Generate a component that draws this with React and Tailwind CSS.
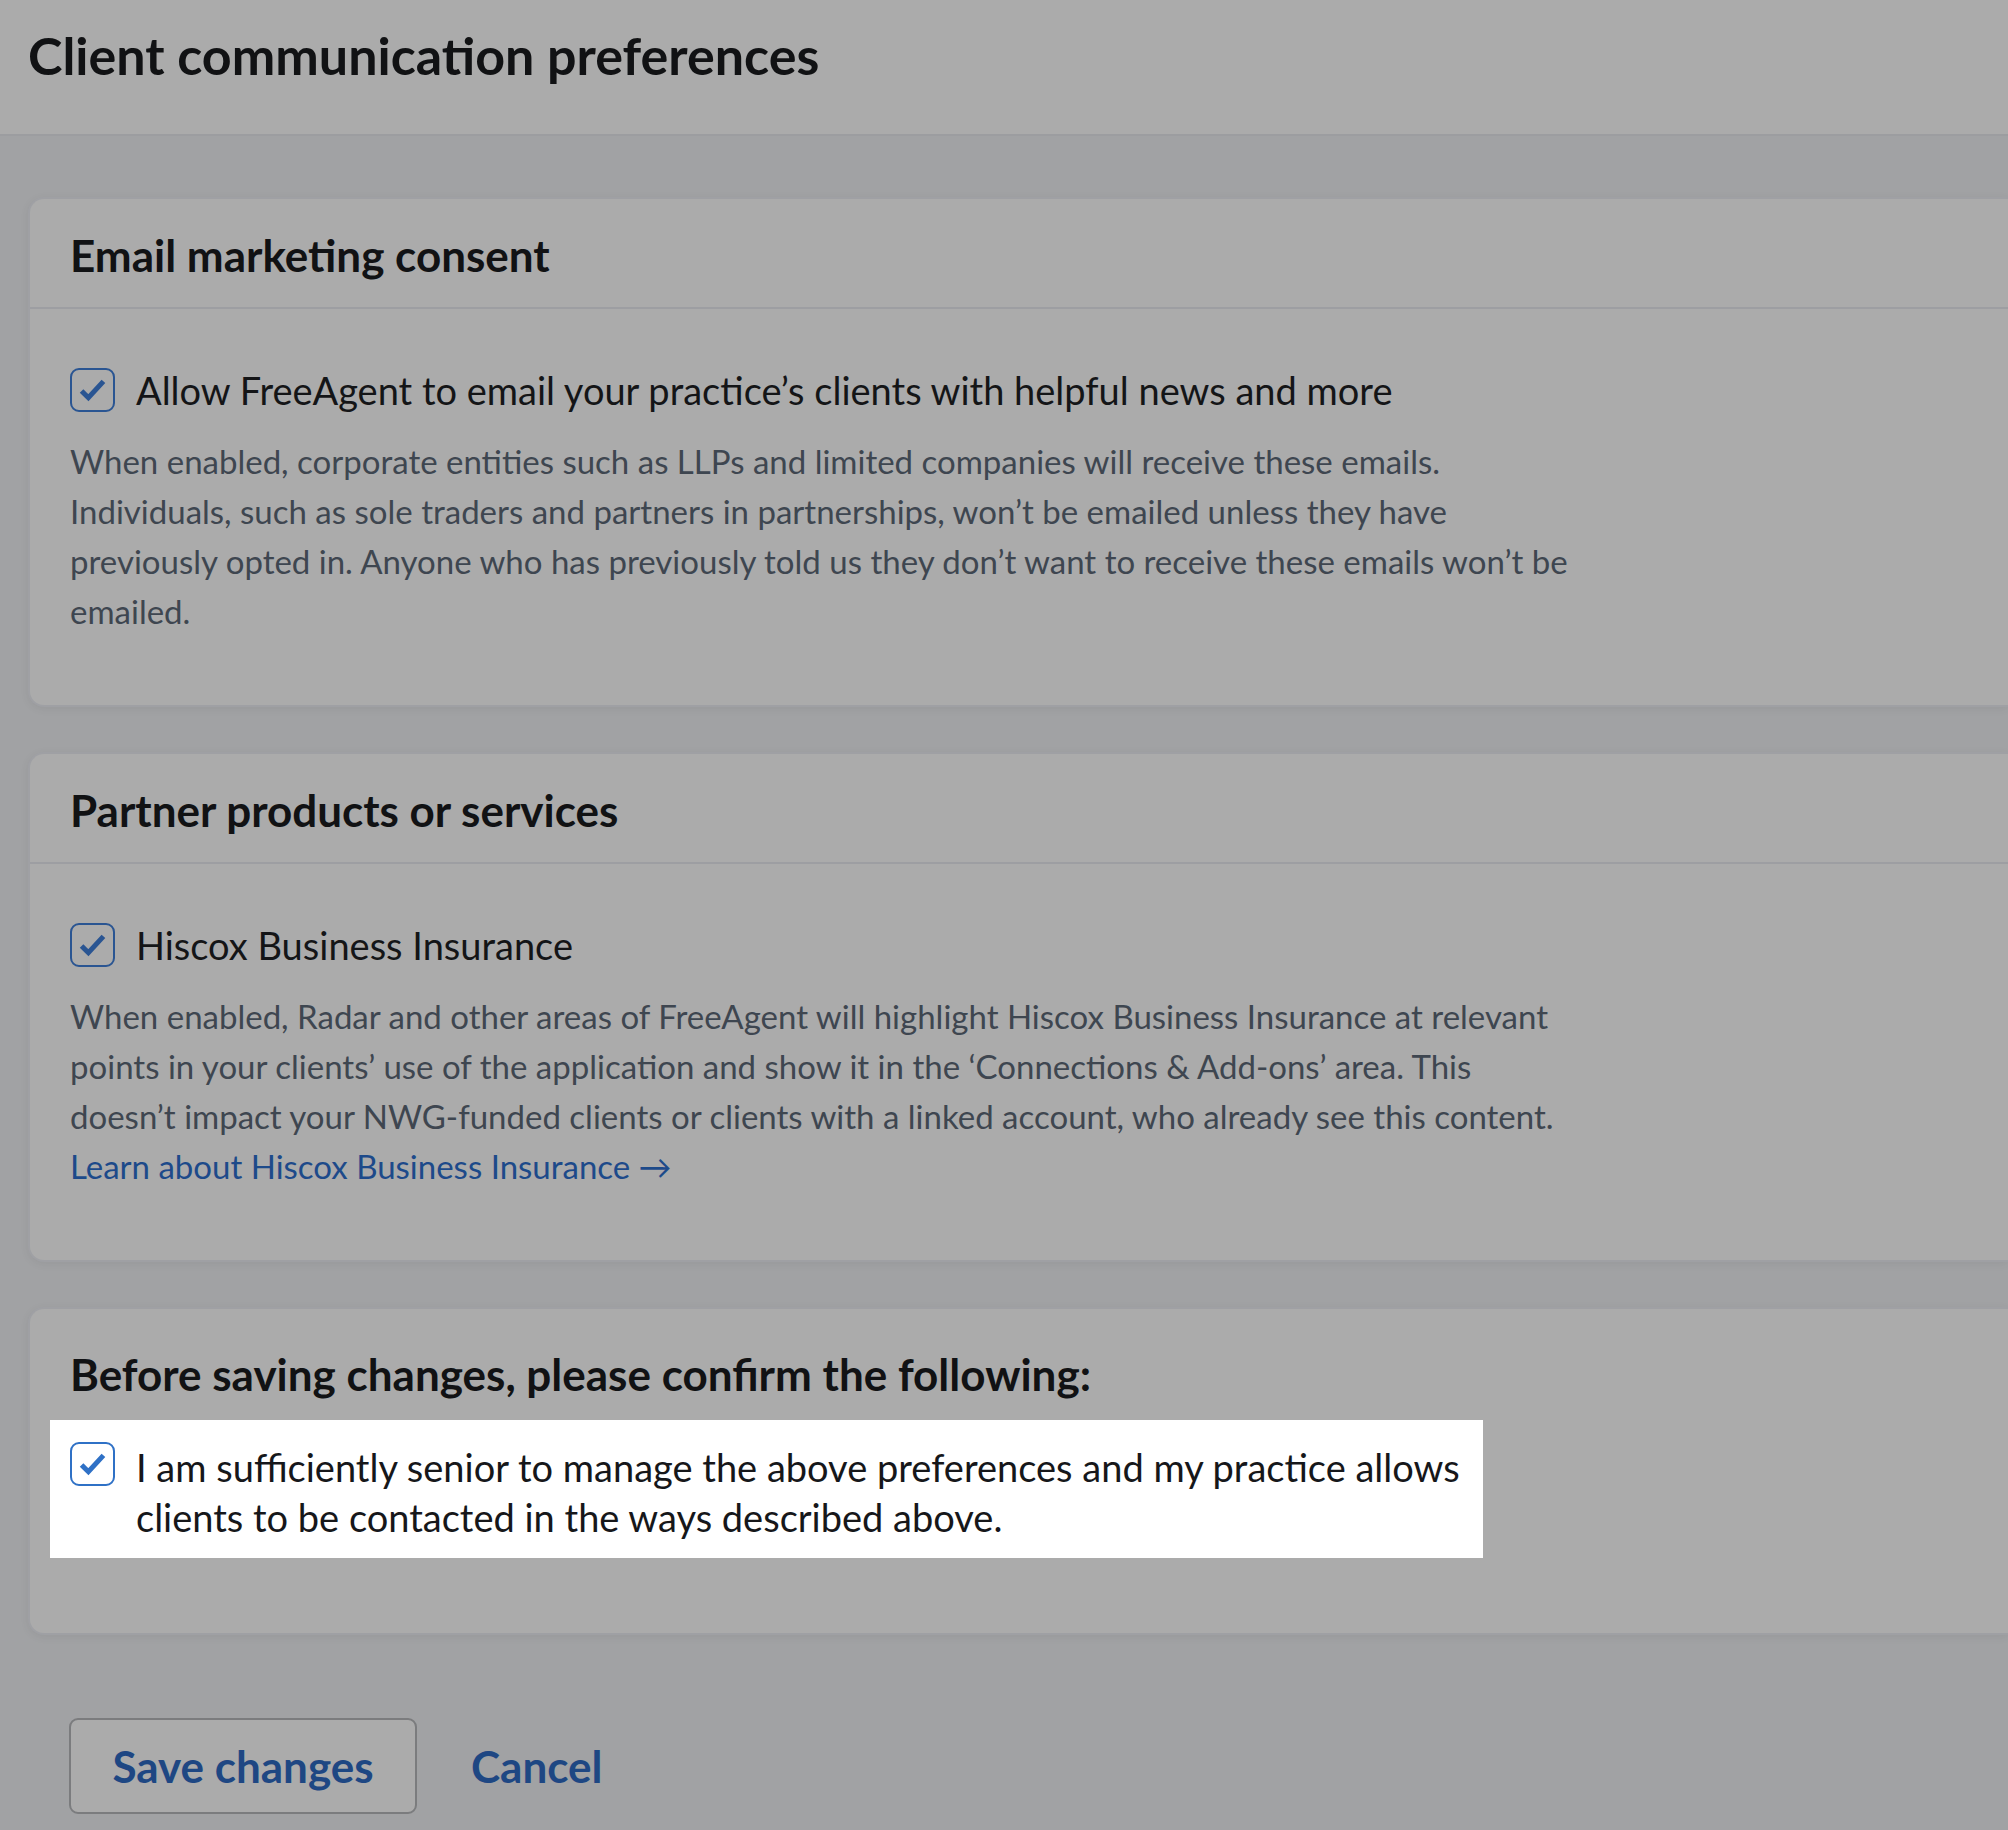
import React from 'react'

const font = { fontFamily: 'Lato, "Liberation Sans", sans-serif' }

function Check({ bright = false }) {
    const color = bright ? '#2f71c6' : '#2a5592'
    return (
        <div
            className={`w-[45px] h-[44px] shrink-0 rounded-[9px] border-2 flex items-center justify-center ${bright ? 'border-[#2f71c6] bg-white' : 'border-[#2a5592] bg-[#ababab]'
                }`}
        >
            <svg width="45" height="44" viewBox="0 0 45 44">
                <path d="M10.5 23 L18 30.5 L34.5 12.5" fill="none" stroke={color} strokeWidth="5.5" />
            </svg>
        </div>
    )
}

function Card({ title, children }) {
    return (
        <section className="ml-[28px] bg-[#ababab] border-2 border-r-0 border-[#9fa0a4] rounded-l-[16px] shadow-[0_2px_10px_rgba(0,0,0,0.06)]">
            <div className="px-[40px] pt-[32px] pb-[28px] border-b-2 border-[#9d9ea2]">
                <h2 className="text-[44px] leading-[48px] font-bold text-[#111214]">{title}</h2>
            </div>
            <div className="px-[40px] pt-[56px] pb-[69px]">{children}</div>
        </section>
    )
}

export default function App() {
    return (
        <div style={font} className="w-[2008px] h-[1830px] overflow-hidden bg-[#a1a2a4]">
            {/* Page header */}
            <header className="h-[136px] bg-[#ababab] border-b-2 border-[#9c9da0] px-[28px] pt-[27px]">
                <h1 className="text-[52px] leading-[56px] font-bold text-[#111214]">Client communication preferences</h1>
            </header>

            <main className="pt-[61px] flex flex-col gap-[45px]">
                <Card title="Email marketing consent">
                    <label className="flex items-center gap-[21px]">
                        <Check />
                        <span className="text-[38px] leading-[50px] text-[#141517]">
                            Allow FreeAgent to email your practice’s clients with helpful news and more
                        </span>
                    </label>
                    <p className="mt-[21px] text-[33px] leading-[50px] text-[#3e4650]">
                        <span className="block">When enabled, corporate entities such as LLPs and limited companies will receive these emails.</span>
                        <span className="block">Individuals, such as sole traders and partners in partnerships, won’t be emailed unless they have</span>
                        <span className="block">previously opted in. Anyone who has previously told us they don’t want to receive these emails won’t be</span>
                        <span className="block">emailed.</span>
                    </p>
                </Card>

                <Card title="Partner products or services">
                    <label className="flex items-center gap-[21px]">
                        <Check />
                        <span className="text-[38px] leading-[50px] text-[#141517]">Hiscox Business Insurance</span>
                    </label>
                    <p className="mt-[21px] text-[33px] leading-[50px] text-[#3e4650]">
                        <span className="block">When enabled, Radar and other areas of FreeAgent will highlight Hiscox Business Insurance at relevant</span>
                        <span className="block">points in your clients’ use of the application and show it in the ‘Connections &amp; Add-ons’ area. This</span>
                        <span className="block">doesn’t impact your NWG-funded clients or clients with a linked account, who already see this content.</span>
                        <a href="#" className="block text-[#1d4a8a]">Learn about Hiscox Business Insurance →</a>
                    </p>
                </Card>

                <section className="ml-[28px] bg-[#ababab] border-2 border-r-0 border-[#9fa0a4] rounded-l-[16px] shadow-[0_2px_10px_rgba(0,0,0,0.06)] px-[40px] pt-[41px] pb-[75px]">
                    <h2 className="text-[44px] leading-[48px] font-bold text-[#111214]">
                        Before saving changes, please confirm the following:
                    </h2>
                    <div className="mt-[22px] -ml-[20px] w-[1433px] bg-white px-[20px] pt-[22px] pb-[16px]">
                        <label className="flex items-start gap-[21px]">
                            <Check bright />
                            <span className="text-[38px] leading-[50px] text-[#16171a]">
                                <span className="block">I am sufficiently senior to manage the above preferences and my practice allows</span>
                                <span className="block">clients to be contacted in the ways described above.</span>
                            </span>
                        </label>
                    </div>
                </section>

                <div className="ml-[69px] mt-[38px] flex items-center gap-[54px]">
                    <button className="w-[348px] h-[96px] rounded-[9px] border-2 border-[#7b7c7e] bg-[#ababab] text-[44px] font-bold text-[#1e4783]">
                        Save changes
                    </button>
                    <button className="text-[44px] font-bold text-[#1e4783]">Cancel</button>
                </div>
            </main>
        </div>
    )
}
